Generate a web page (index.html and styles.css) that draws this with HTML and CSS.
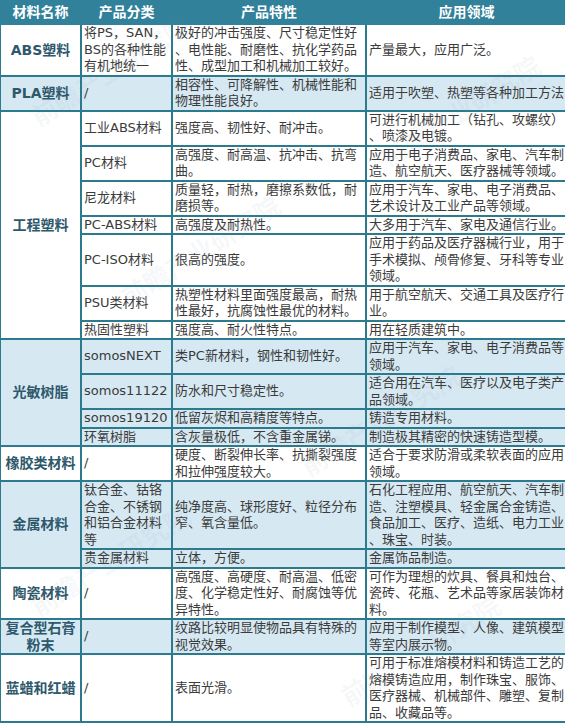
FILE: index.html
```html
<!DOCTYPE html>
<html lang="zh-CN">
<head>
<meta charset="utf-8">
<title>3D打印材料</title>
<link rel="stylesheet" href="styles.css">
</head>
<body>
<div class="sheet">
<table class="materials">
<colgroup>
<col class="c1"><col class="c2"><col class="c3"><col class="c4">
</colgroup>
<thead>
<tr><th>材料名称</th><th>产品分类</th><th>产品特性</th><th>应用领域</th></tr>
</thead>
<tbody>
<tr>
<td class="name">ABS塑料</td>
<td>将PS，SAN，<br>BS的各种性能<br>有机地统一</td>
<td>极好的冲击强度、尺寸稳定性好<br>、电性能、耐磨性、抗化学药品<br>性、成型加工和机械加工较好。</td>
<td>产量最大，应用广泛。</td>
</tr>
<tr class="alt">
<td class="name">PLA塑料</td>
<td>/</td>
<td>相容性、可降解性、机械性能和<br>物理性能良好。</td>
<td>适用于吹塑、热塑等各种加工方法</td>
</tr>
<tr>
<td class="name" rowspan="7">工程塑料</td>
<td>工业ABS材料</td>
<td>强度高、韧性好、耐冲击。</td>
<td>可进行机械加工（钻孔、攻螺纹）<br>、喷漆及电镀。</td>
</tr>
<tr>
<td>PC材料</td>
<td>高强度、耐高温、抗冲击、抗弯<br>曲。</td>
<td>应用于电子消费品、家电、汽车制<br>造、航空航天、医疗器械等领域。</td>
</tr>
<tr>
<td>尼龙材料</td>
<td>质量轻，耐热，磨擦系数低，耐<br>磨损等。</td>
<td>应用于汽车、家电、电子消费品、<br>艺术设计及工业产品等领域。</td>
</tr>
<tr>
<td>PC-ABS材料</td>
<td>高强度及耐热性。</td>
<td>大多用于汽车、家电及通信行业。</td>
</tr>
<tr>
<td>PC-ISO材料</td>
<td>很高的强度。</td>
<td>应用于药品及医疗器械行业，用于<br>手术模拟、颅骨修复、牙科等专业<br>领域。</td>
</tr>
<tr>
<td>PSU类材料</td>
<td>热塑性材料里面强度最高，耐热<br>性最好，抗腐蚀性最优的材料。</td>
<td>用于航空航天、交通工具及医疗行<br>业。</td>
</tr>
<tr>
<td>热固性塑料</td>
<td>强度高、耐火性特点。</td>
<td>用在轻质建筑中。</td>
</tr>
<tr class="alt">
<td class="name" rowspan="4">光敏树脂</td>
<td>somosNEXT</td>
<td>类PC新材料，钢性和韧性好。</td>
<td>应用于汽车、家电、电子消费品等<br>领域。</td>
</tr>
<tr class="alt">
<td>somos11122</td>
<td>防水和尺寸稳定性。</td>
<td>适合用在汽车、医疗以及电子类产<br>品领域。</td>
</tr>
<tr class="alt">
<td>somos19120</td>
<td>低留灰烬和高精度等特点。</td>
<td>铸造专用材料。</td>
</tr>
<tr class="alt">
<td>环氧树脂</td>
<td>含灰量极低，不含重金属锑。</td>
<td>制造极其精密的快速铸造型模。</td>
</tr>
<tr>
<td class="name">橡胶类材料</td>
<td>/</td>
<td>硬度、断裂伸长率、抗撕裂强度<br>和拉伸强度较大。</td>
<td>适合于要求防滑或柔软表面的应用<br>领域。</td>
</tr>
<tr class="alt">
<td class="name" rowspan="2">金属材料</td>
<td>钛合金、钴铬<br>合金、不锈钢<br>和铝合金材料<br>等</td>
<td>纯净度高、球形度好、粒径分布<br>窄、氧含量低。</td>
<td>石化工程应用、航空航天、汽车制<br>造、注塑模具、轻金属合金铸造、<br>食品加工、医疗、造纸、电力工业<br>、珠宝、时装。</td>
</tr>
<tr class="alt">
<td>贵金属材料</td>
<td>立体，方便。</td>
<td>金属饰品制造。</td>
</tr>
<tr>
<td class="name">陶瓷材料</td>
<td>/</td>
<td>高强度、高硬度、耐高温、低密<br>度、化学稳定性好、耐腐蚀等优<br>异特性。</td>
<td>可作为理想的炊具、餐具和烛台、<br>瓷砖、花瓶、艺术品等家居装饰材<br>料。</td>
</tr>
<tr class="alt">
<td class="name">复合型石膏<br>粉末</td>
<td>/</td>
<td>纹路比较明显使物品具有特殊的<br>视觉效果。</td>
<td>应用于制作模型、人像、建筑模型<br>等室内展示物。</td>
</tr>
<tr>
<td class="name">蓝蜡和红蜡</td>
<td>/</td>
<td>表面光滑。</td>
<td>可用于标准熔模材料和铸造工艺的<br>熔模铸造应用，制作珠宝、服饰、<br>医疗器械、机械部件、雕塑、复制<br>品、收藏品等。</td>
</tr>
</tbody>
</table>
<div class="marks" aria-hidden="true">
<span class="mark m1">前瞻产业研究院</span>
<span class="mark m2">前瞻产业研究院</span>
<span class="mark m3">前瞻产业研究院</span>
<span class="mark m4">前瞻产业研究院</span>
<span class="mark m5">前瞻产业研究院</span>
<span class="mark m6">前瞻产业研究院</span>
</div>
</div>
</body>
</html>
```
FILE: styles.css
```css
* { box-sizing: border-box; }
html, body { margin: 0; padding: 0; background: #ffffff; }
body {
  width: 565px;
  height: 724px;
  overflow: hidden;
  font-family: "DejaVu Sans", "Noto Sans CJK SC", sans-serif;
  font-size: 13px;
  color: #3b3b3b;
}
.sheet { position: relative; width: 565px; }

.materials {
  border-collapse: collapse;
  table-layout: fixed;
  width: 567px;
  margin-left: -1px;
}
.c1 { width: 81px; }
.c2 { width: 91px; }
.c3 { width: 194px; }
.c4 { width: 201px; }

.materials td,
.materials th {
  border: 2px solid #2c7a8d;
  padding: 0 1px 0 2px;
  line-height: 16.5px;
  vertical-align: middle;
  white-space: nowrap;
  text-align: left;
  font-weight: normal;
  background: #ffffff;
}
.materials thead th {
  background: #31819a;
  border-color: #31819a;
  color: #ffffff;
  font-weight: bold;
  font-size: 14px;
  text-align: center;
  height: 23px;
  padding: 0;
}
.materials .name {
  text-align: center;
  font-weight: bold;
  font-size: 14px;
  color: #2e586b;
  padding: 0;
}
.materials .alt td { background: #d6e9f3; }

.marks {
  position: absolute;
  inset: 0;
  overflow: hidden;
  pointer-events: none;
}
.mark {
  position: absolute;
  width: 182px;
  font-family: "Noto Sans CJK SC", sans-serif;
  font-weight: bold;
  font-size: 26px;
  line-height: 36px;
  color: rgba(120, 135, 150, 0.07);
  transform: rotate(-32deg);
  white-space: nowrap;
}
.m1 { left: 19px; top: 52px; }
.m2 { left: 369px; top: 92px; }
.m3 { left: 109px; top: 232px; }
.m4 { left: 289px; top: 402px; }
.m5 { left: 19px; top: 542px; }
.m6 { left: 329px; top: 632px; }
```
